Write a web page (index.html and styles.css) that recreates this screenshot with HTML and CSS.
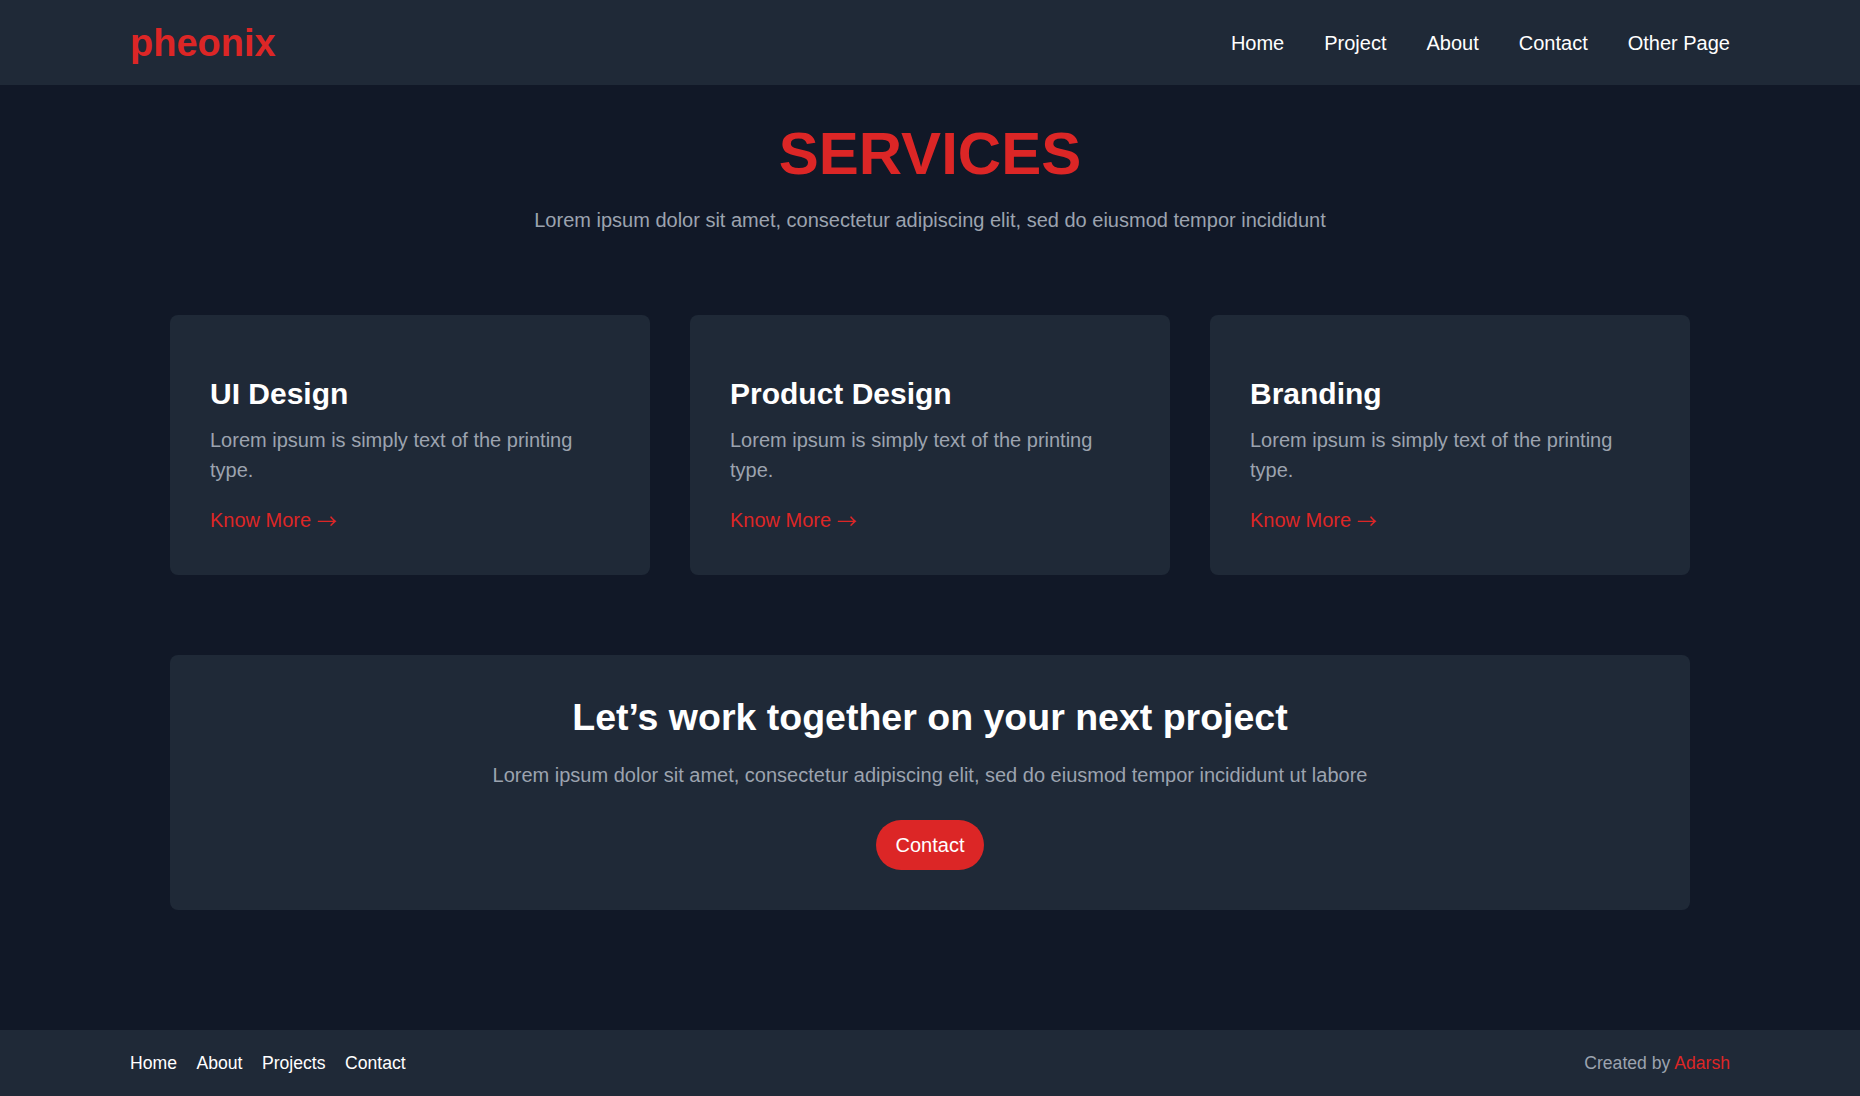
FILE: index.html
```html
<!DOCTYPE html>
<html lang="en">
<head>
<meta charset="utf-8">
<title>pheonix - Services</title>
<link rel="stylesheet" href="styles.css">
</head>
<body>
<div class="page">
  <header class="site-header">
    <div class="header-inner">
      <a class="logo" href="#">pheonix</a>
      <nav class="main-nav">
        <a href="#">Home</a>
        <a href="#">Project</a>
        <a href="#">About</a>
        <a href="#">Contact</a>
        <a href="#">Other Page</a>
      </nav>
    </div>
  </header>

  <main class="main">
    <section class="intro">
      <h1 class="intro-title">SERVICES</h1>
      <p class="intro-text">Lorem ipsum dolor sit amet, consectetur adipiscing elit, sed do eiusmod tempor incididunt</p>
    </section>

    <section class="cards">
      <article class="card">
        <h2 class="card-title">UI Design</h2>
        <p class="card-text">Lorem ipsum is simply text of the printing type.</p>
        <a class="card-link" href="#">Know More <span class="arrow">→</span></a>
      </article>
      <article class="card">
        <h2 class="card-title">Product Design</h2>
        <p class="card-text">Lorem ipsum is simply text of the printing type.</p>
        <a class="card-link" href="#">Know More <span class="arrow">→</span></a>
      </article>
      <article class="card">
        <h2 class="card-title">Branding</h2>
        <p class="card-text">Lorem ipsum is simply text of the printing type.</p>
        <a class="card-link" href="#">Know More <span class="arrow">→</span></a>
      </article>
    </section>

    <section class="cta">
      <h2 class="cta-title">Let’s work together on your next project</h2>
      <p class="cta-text">Lorem ipsum dolor sit amet, consectetur adipiscing elit, sed do eiusmod tempor incididunt ut labore</p>
      <a class="cta-button" href="#">Contact</a>
    </section>
  </main>

  <footer class="site-footer">
    <div class="footer-inner">
      <nav class="footer-nav">
        <a href="#">Home</a>
        <a href="#">About</a>
        <a href="#">Projects</a>
        <a href="#">Contact</a>
      </nav>
      <p class="credit">Created by <a href="#">Adarsh</a></p>
    </div>
  </footer>
</div>
</body>
</html>
```

FILE: styles.css
```css
* {
  box-sizing: border-box;
}

html, body {
  margin: 0;
  padding: 0;
}

body {
  background: #111827;
  color: #ffffff;
  font-family: "Liberation Sans", Arial, sans-serif;
}

a {
  text-decoration: none;
  color: inherit;
}

.page {
  min-height: 100vh;
  display: flex;
  flex-direction: column;
}

/* Header */
.site-header {
  background: #1f2937;
  height: 85px;
  display: flex;
  align-items: center;
}

.header-inner {
  width: 1600px;
  margin: 0 auto;
  display: flex;
  justify-content: space-between;
  align-items: center;
}

.logo {
  color: #dc2626;
  font-size: 38px;
  font-weight: 700;
  line-height: 40px;
}

.main-nav {
  display: flex;
  gap: 40px;
  font-size: 20px;
  line-height: 28px;
}

.main-nav a {
  color: #ffffff;
}

/* Main */
.main {
  flex: 1;
  width: 1520px;
  margin: 0 auto;
  padding-top: 39px;
}

.intro {
  text-align: center;
}

.intro-title {
  margin: 0;
  font-size: 60px;
  line-height: 60px;
  font-weight: 700;
  color: #dc2626;
}

.intro-text {
  margin: 22px 0 0;
  font-size: 20px;
  line-height: 28px;
  color: #9ca3af;
}

.cards {
  margin-top: 81px;
  display: grid;
  grid-template-columns: repeat(3, 1fr);
  gap: 40px;
}

.card {
  background: #1f2937;
  border-radius: 8px;
  padding: 61px 40px 40px;
}

.card-title {
  margin: 0 0 13px;
  font-size: 30px;
  line-height: 36px;
  font-weight: 700;
  color: #ffffff;
}

.card-text {
  margin: 0 0 20px;
  font-size: 20px;
  line-height: 30px;
  color: #9ca3af;
}

.card-link {
  display: block;
  height: 30px;
  font-size: 20px;
  line-height: 30px;
  color: #dc2626;
}

.arrow {
  font-family: "Noto Sans CJK JP", "DejaVu Sans", sans-serif;
  font-size: 20px;
  line-height: 0;
  vertical-align: -2px;
}

.cta {
  margin-top: 80px;
  background: #1f2937;
  border-radius: 8px;
  padding: 40px 40px 40px;
  text-align: center;
  display: flex;
  flex-direction: column;
  align-items: center;
}

.cta-title {
  margin: 0;
  font-size: 37.5px;
  line-height: 44px;
  font-weight: 700;
  color: #ffffff;
}

.cta-text {
  margin: 22px 0 0;
  font-size: 20px;
  line-height: 28px;
  color: #9ca3af;
}

.cta-button {
  margin-top: 31px;
  height: 50px;
  padding: 0 20px;
  display: flex;
  align-items: center;
  background: #dc2626;
  color: #ffffff;
  border-radius: 9999px;
  font-size: 20px;
  line-height: 28px;
}

/* Footer */
.site-footer {
  background: #1f2937;
  height: 66px;
  display: flex;
  align-items: center;
}

.footer-inner {
  width: 1600px;
  margin: 0 auto;
  display: flex;
  justify-content: space-between;
  align-items: center;
  font-size: 17.6px;
  line-height: 24px;
}

.footer-nav {
  display: flex;
  gap: 19.5px;
}

.footer-nav a {
  color: #ffffff;
}

.credit {
  margin: 0;
  color: #9ca3af;
}

.credit a {
  color: #dc2626;
}
```
